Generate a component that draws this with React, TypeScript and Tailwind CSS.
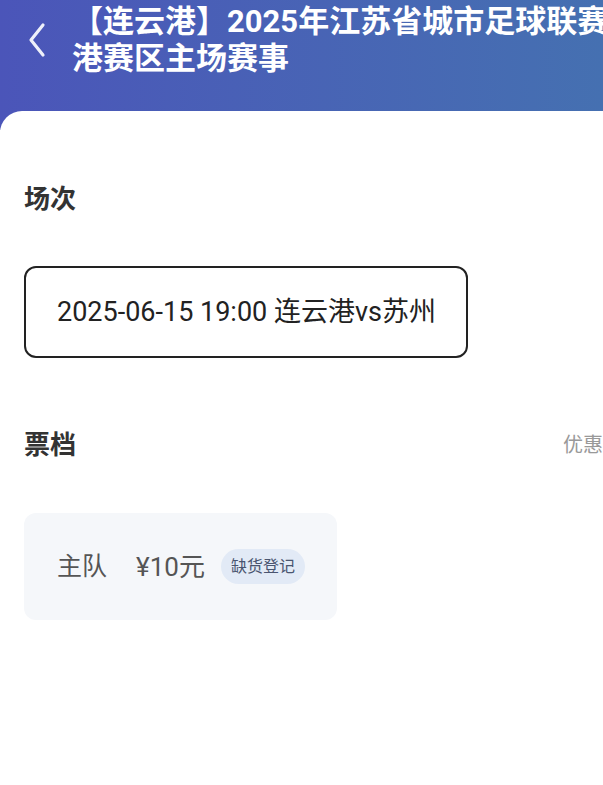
import React from "react";

export default function App() {
  const font = { fontFamily: 'Roboto, "Noto Sans CJK SC", "Noto Sans", sans-serif' };
  return (
    <div className="w-[603px] h-[785px] overflow-hidden bg-white relative" style={font}>
      <div className="h-[130px] bg-gradient-to-r from-[#4b55b9] to-[#4570b1] flex items-start">
        <div className="w-[72px] shrink-0 pt-[22px] pl-[28px]">
          <svg width="18" height="36" viewBox="0 0 18 36" fill="none">
            <path d="M15 3 L3 18 L15 33" stroke="#eef0fa" strokeWidth="3.2" strokeLinecap="round" strokeLinejoin="round" />
          </svg>
        </div>
        <div className="pt-[3px] text-white font-bold text-[31px] leading-[37px] whitespace-nowrap">
          <div>【连云港】2025年江苏省城市足球联赛连云</div>
          <div>港赛区主场赛事</div>
        </div>
      </div>
      <div className="-mt-[19px] bg-white rounded-tl-[22px] relative px-[24px] pt-[71px]">
        <div className="text-[26px] font-bold text-[#333] leading-[34px]">场次</div>
        <div className="mt-[50px] w-[444px] h-[92px] border-2 border-[#222] rounded-[12px] flex items-center pl-[31px]">
          <span className="text-[27px] text-[#222] leading-none">2025-06-15 19:00 连云港vs苏州</span>
        </div>
        <div className="mt-[70px] flex items-center">
          <div className="text-[26px] font-bold text-[#333] leading-[34px]">票档</div>
          <div className="ml-auto w-[40px] overflow-hidden -mr-[24px] text-[20px] text-[#999] whitespace-nowrap">优惠</div>
        </div>
        <div className="mt-[51px] w-[313px] h-[107px] bg-[#f5f7fa] rounded-[12px] flex items-center pl-[33px]">
          <span className="text-[25px] text-[#555] leading-none">主队</span>
          <span className="ml-[29px] text-[26px] text-[#555] leading-none">¥10元</span>
          <span className="ml-[16px] h-[35px] px-[10px] rounded-full bg-[#e2eaf6] text-[16px] text-[#4a5570] flex items-center">缺货登记</span>
        </div>
      </div>
    </div>
  );
}
